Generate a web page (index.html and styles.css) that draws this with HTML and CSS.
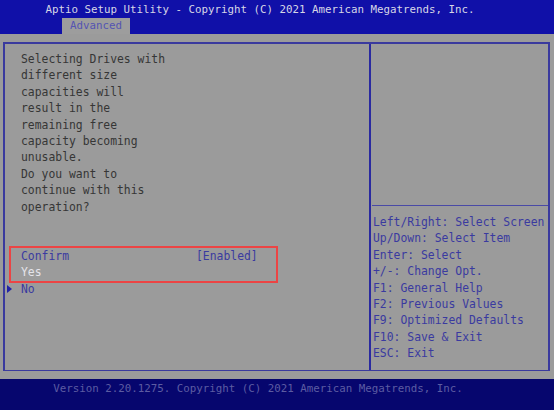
FILE: index.html
```html
<!DOCTYPE html>
<html lang="en">
<head>
    <meta charset="UTF-8">
    <meta name="viewport" content="width=device-width, initial-scale=1.0">
    <link rel="stylesheet" href="styles.css">
</head>
<body>

<div class="screen">
    <div class="header">
        <div class="title">Aptio Setup Utility - Copyright (C) 2021 American Megatrends, Inc.</div>
        <div class="tabs">
            <div class="tab active">Advanced</div>
        </div>
    </div>

    <div class="main">
        <div class="frame">
            <div class="panel left">
                <div class="message">
                    <div>Selecting Drives with</div>
                    <div>different size</div>
                    <div>capacities will</div>
                    <div>result in the</div>
                    <div>remaining free</div>
                    <div>capacity becoming</div>
                    <div>unusable.</div>
                    <div>Do you want to</div>
                    <div>continue with this</div>
                    <div>operation?</div>
                    <div>&nbsp;</div>
                    <div>&nbsp;</div>
                </div>
                <div class="confirm-group">
                    <div class="setting">
                        <span class="name">Confirm</span>
                        <span class="value">[Enabled]</span>
                    </div>
                    <div class="option selected">Yes</div>
                </div>
                <div class="option current"><span class="arrow"></span>No</div>
            </div>

            <div class="panel right">
                <div class="help-area"></div>
                <div class="keys">
                    <div>Left/Right: Select Screen</div>
                    <div>Up/Down: Select Item</div>
                    <div>Enter: Select</div>
                    <div>+/-: Change Opt.</div>
                    <div>F1: General Help</div>
                    <div>F2: Previous Values</div>
                    <div>F9: Optimized Defaults</div>
                    <div>F10: Save &amp; Exit</div>
                    <div>ESC: Exit</div>
                </div>
            </div>
        </div>
    </div>

    <div class="footer">Version 2.20.1275. Copyright (C) 2021 American Megatrends, Inc.</div>
</div>

</body>
</html>
```

FILE: styles.css
```css
body {
    margin: 0;
    background: #9b9b9b;
    font-family: "DejaVu Sans Mono", "Liberation Mono", monospace;
}

.screen {
    width: 554px;
    height: 410px;
    display: flex;
    flex-direction: column;
    overflow: hidden;
}

/* Barra superior azul con el titulo y la pestaña */
.header {
    height: 34px;
    background: #1010a8;
    display: flex;
    flex-direction: column;
    align-items: center;
}

.title {
    margin: 3px 34px 0 0;
    font-size: 10.8px;
    line-height: 14px;
    color: #d6d6e6;
    white-space: nowrap;
}

.tabs {
    align-self: flex-start;
    margin-top: 1px;
    padding-left: 62px;
    display: flex;
}

.tab {
    width: 68px;
    height: 16px;
    font-size: 10.8px;
    line-height: 16px;
    text-align: center;
    color: #5454b2;
}

.tab.active {
    background: #9d9d9d;
}

/* Zona central gris */
.main {
    flex: 1;
    padding: 8px 4px 8px 3px;
    display: flex;
}

.frame {
    flex: 1;
    display: flex;
    border: 2px solid #3a3a9e;
    border-bottom-width: 1.5px;
}

.panel {
    font-size: 11.4px;
    line-height: 16.4px;
    white-space: nowrap;
}

.panel.left {
    width: 348px;
    padding: 7px 0 0 16px;
    border-right: 2px solid #2a2aa0;
    color: #363636;
}

.confirm-group {
    width: 255px;
    margin-left: -10px;
    padding-left: 10px;
    outline: 2px solid #ec4444;
    outline-offset: 0;
}

.setting {
    display: flex;
    color: #3a3aa0;
}

.setting .name {
    width: 175px;
}

.option {
    color: #3a3aa0;
}

.option.selected {
    color: #e4e4ea;
}

.option.current {
    display: flex;
    align-items: center;
    margin-left: -14px;
}

/* Flecha del elemento actual */
.arrow {
    width: 0;
    height: 0;
    margin: 0 9px 0 0;
    border-top: 4px solid transparent;
    border-bottom: 4px solid transparent;
    border-left: 5px solid #2222a6;
}

.panel.right {
    flex: 1;
    display: flex;
    flex-direction: column;
    color: #3a3aa0;
}

.help-area {
    height: 161px;
    margin-left: 1px;
    border-bottom: 1.5px solid #4a4aa6;
}

.keys {
    padding: 8px 0 0 2px;
}

/* Barra inferior */
.footer {
    height: 31px;
    background: #06066e;
    color: #5c5ca2;
    font-size: 10.8px;
    line-height: 16px;
    padding: 2px 38px 0 0;
    box-sizing: border-box;
    text-align: center;
    white-space: nowrap;
}
```
